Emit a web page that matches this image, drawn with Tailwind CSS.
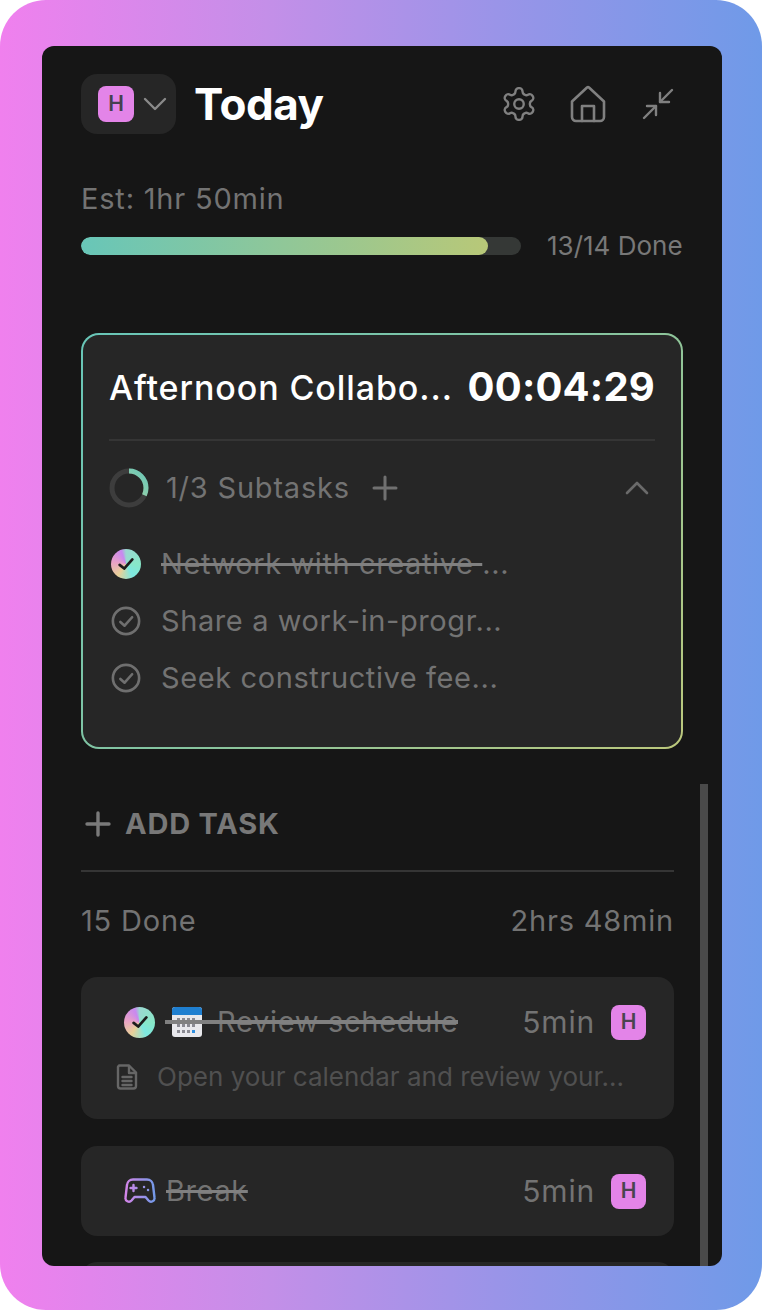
<!DOCTYPE html>
<html lang="en">
<head>
    <meta charset="UTF-8">
    <meta name="viewport" content="width=device-width, initial-scale=1.0">
    <title>Today</title>
    <script src="https://cdn.jsdelivr.net/npm/@tailwindcss/browser@4"></script>
</head>
<body class="bg-white font-['Inter',sans-serif]">

    <div class="w-[762px] h-[1310px] rounded-[46px] pt-[46px] pl-[42px] bg-[linear-gradient(90deg,#f080ee_0%,#c48fe8_35%,#9a94e8_65%,#6f9ae8_100%)] overflow-hidden">
        <div class="relative w-[680px] h-[1220px] rounded-[12px] bg-[#161616] overflow-hidden pl-[39px] pt-[28px]">

            <!-- Header -->
            <div class="flex items-center h-[60px]">
                <div class="flex items-center w-[95px] h-[60px] rounded-[16px] bg-[#262626] pl-[17px]">
                    <div class="flex items-center justify-center w-[36px] h-[36px] rounded-[8px] bg-[#e384e8] text-[#45404e] text-[21px] font-semibold">H</div>
                    <svg class="ml-[9px]" width="24" height="14" viewBox="0 0 24 14" fill="none" stroke="#8a8a8a" stroke-width="2.4" stroke-linecap="round" stroke-linejoin="round"><path d="M2 2l10 10 10-10"/></svg>
                </div>
                <h1 class="ml-[18px] text-[44px] leading-[60px] font-bold tracking-[-0.5px] text-white">Today</h1>
                <div class="ml-auto flex items-center mr-[48px]">
                    <svg width="38" height="38" viewBox="0 0 24 24" fill="none" stroke="#808080" stroke-width="1.5" stroke-linecap="round" stroke-linejoin="round"><path d="M12.22 2h-.44a2 2 0 0 0-2 2v.18a2 2 0 0 1-1 1.73l-.43.25a2 2 0 0 1-2 0l-.15-.08a2 2 0 0 0-2.73.73l-.22.38a2 2 0 0 0 .73 2.73l.15.1a2 2 0 0 1 1 1.72v.51a2 2 0 0 1-1 1.74l-.15.09a2 2 0 0 0-.73 2.73l.22.38a2 2 0 0 0 2.73.73l.15-.08a2 2 0 0 1 2 0l.43.25a2 2 0 0 1 1 1.73V20a2 2 0 0 0 2 2h.44a2 2 0 0 0 2-2v-.18a2 2 0 0 1 1-1.73l.43-.25a2 2 0 0 1 2 0l.15.08a2 2 0 0 0 2.73-.73l.22-.39a2 2 0 0 0-.73-2.73l-.15-.08a2 2 0 0 1-1-1.74v-.5a2 2 0 0 1 1-1.74l.15-.09a2 2 0 0 0 .73-2.73l-.22-.38a2 2 0 0 0-2.73-.73l-.15.08a2 2 0 0 1-2 0l-.43-.25a2 2 0 0 1-1-1.73V4a2 2 0 0 0-2-2z"/><circle cx="12" cy="12" r="3"/></svg>
                    <svg class="ml-[32px]" width="36" height="38" viewBox="0 0 36 38" fill="none" stroke="#808080" stroke-width="2.6" stroke-linecap="round" stroke-linejoin="round"><path d="M2 16.5 17 2.5a1.5 1.5 0 0 1 2 0l15 14V32a4 4 0 0 1-4 4H6a4 4 0 0 1-4-4z"/><path d="M12 36V21h12v15"/></svg>
                    <svg class="ml-[36px]" width="32" height="32" viewBox="0 0 32 32" fill="none" stroke="#808080" stroke-width="2.4" stroke-linecap="round" stroke-linejoin="round"><path d="M30 2 18 14"/><path d="M18 5v9h9"/><path d="M2 30 14 18"/><path d="M5 18h9v9"/></svg>
                </div>
            </div>

            <!-- Estimate and progress -->
            <div>
                <p class="mt-[48px] text-[29px] leading-[34px] tracking-[0.8px] text-[#737373]">Est: 1hr 50min</p>
                <div class="flex items-center mt-[21px] h-[18px]">
                    <div class="w-[440px] h-[18px] rounded-full bg-[#353836] overflow-hidden">
                        <div class="w-[407px] h-full rounded-full bg-[linear-gradient(90deg,#68c6b8,#b8c878)]"></div>
                    </div>
                    <span class="ml-[26px] text-[26px] leading-[18px] text-[#787878] whitespace-nowrap">13/14 Done</span>
                </div>

                <!-- Active task -->
                <div class="mt-[78px] w-[602px] h-[416px] rounded-[18px] p-[2px] bg-[linear-gradient(135deg,#68c6b8,#85c4a0_50%,#bcc87c)]">
                    <div class="w-full h-full rounded-[16px] bg-[#262626] px-[26px]">
                        <div class="flex items-center justify-between h-[106px] border-b-2 border-[#353535]">
                            <span class="text-[34px] font-medium tracking-[0.9px] text-white whitespace-nowrap">Afternoon Collabo...</span>
                            <span class="text-[40px] font-bold tracking-[0.2px] text-white">00:04:29</span>
                        </div>
                        <div class="flex items-center h-[94px]">
                            <svg width="40" height="40" viewBox="0 0 40 40" fill="none" class="-rotate-90">
                                <defs><linearGradient id="arc" x1="0" y1="0" x2="1" y2="1"><stop offset="0" stop-color="#c8dc98"/><stop offset="1" stop-color="#68c6b8"/></linearGradient></defs>
                                <circle cx="20" cy="20" r="17" stroke="#3d3d3d" stroke-width="5"/>
                                <circle cx="20" cy="20" r="17" stroke="url(#arc)" stroke-width="5" stroke-dasharray="34 107"/>
                            </svg>
                            <span class="ml-[17px] text-[29px] tracking-[0.8px] text-[#737373]">1/3 Subtasks</span>
                            <svg class="ml-[22px]" width="26" height="26" viewBox="0 0 26 26" stroke="#707070" stroke-width="3" stroke-linecap="round"><path d="M13 2v22M2 13h22"/></svg>
                            <svg class="ml-auto mr-[6px]" width="24" height="14" viewBox="0 0 24 14" fill="none" stroke="#6a6a6a" stroke-width="2.6" stroke-linecap="round" stroke-linejoin="round"><path d="M2 12 12 2l10 10"/></svg>
                        </div>
                        <ul class="flex flex-col text-[29px] tracking-[0.6px] text-[#737373]">
                            <li class="flex items-center h-[57px]">
                                <div class="flex items-center justify-center w-[30px] h-[30px] ml-[2px] rounded-full bg-[conic-gradient(#9ad8d0_0deg,#88e8c8_90deg,#7ce8e0_150deg,#e8d098_215deg,#e8a0c8_280deg,#c888f0_340deg,#9ad8d0_360deg)]">
                                    <svg width="20" height="20" viewBox="0 0 22 22" fill="none" stroke="#1c1c1c" stroke-width="3" stroke-linecap="round" stroke-linejoin="round"><path d="M4 12l5 4 9-10"/></svg>
                                </div>
                                <span class="ml-[20px] whitespace-nowrap"><span class="line-through decoration-[3px] decoration-[#808080]">Network with creative&nbsp;</span><span>...</span></span>
                            </li>
                            <li class="flex items-center h-[57px]">
                                <svg class="ml-[2px]" width="30" height="30" viewBox="0 0 32 32" fill="none" stroke="#6f6f6f" stroke-width="2.8" stroke-linecap="round" stroke-linejoin="round"><circle cx="16" cy="16" r="14"/><path d="M10 17l4.500 4 8-9"/></svg>
                                <span class="ml-[20px] whitespace-nowrap">Share a work-in-progr...</span>
                            </li>
                            <li class="flex items-center h-[57px]">
                                <svg class="ml-[2px]" width="30" height="30" viewBox="0 0 32 32" fill="none" stroke="#6f6f6f" stroke-width="2.8" stroke-linecap="round" stroke-linejoin="round"><circle cx="16" cy="16" r="14"/><path d="M10 17l4.500 4 8-9"/></svg>
                                <span class="ml-[20px] whitespace-nowrap">Seek constructive fee...</span>
                            </li>
                        </ul>
                    </div>
                </div>

                <!-- Add task -->
                <div class="flex items-center w-[593px] h-[123px] border-b-2 border-[#353535] pt-[28px]">
                    <svg class="ml-[4px]" width="26" height="26" viewBox="0 0 26 26" stroke="#7a7a7a" stroke-width="3.400" stroke-linecap="round"><path d="M13 2v22M2 13h22"/></svg>
                    <span class="ml-[14px] text-[29px] font-bold tracking-[0.8px] text-[#787878]">ADD TASK</span>
                </div>

                <div class="flex items-center justify-between w-[593px] h-[34px] mt-[32px] text-[29px] tracking-[0.8px] text-[#737373]">
                    <span>15 Done</span>
                    <span>2hrs 48min</span>
                </div>

                <!-- Done tasks -->
                <div class="w-[593px] h-[142px] mt-[39px] rounded-[16px] bg-[#262626] pl-[43px] pr-[28px] pt-[27px]">
                    <div class="flex items-center h-[36px]">
                        <div class="flex items-center justify-center w-[31px] h-[31px] rounded-full bg-[conic-gradient(#9ad8d0_0deg,#88e8c8_90deg,#7ce8e0_150deg,#e8d098_215deg,#e8a0c8_280deg,#c888f0_340deg,#9ad8d0_360deg)]">
                            <svg width="20" height="20" viewBox="0 0 22 22" fill="none" stroke="#1c1c1c" stroke-width="3" stroke-linecap="round" stroke-linejoin="round"><path d="M4 12l5 4 9-10"/></svg>
                        </div>
                        <div class="relative flex items-center ml-[10px] pl-[7px]">
                            <svg width="30" height="30" viewBox="0 0 30 30">
                                <rect x="0" y="0" width="30" height="30" rx="3" fill="#e8e8ec"/>
                                <path d="M0 3a3 3 0 0 1 3-3h24a3 3 0 0 1 3 3v5H0z" fill="#1f7fd0"/>
                                <path d="M5 11h3v3H5zM10 11h3v3h-3zM15 11h3v3h-3zM20 11h3v3h-3zM5 17h3v3H5zM10 17h3v3h-3zM15 17h3v3h-3zM20 17h3v3h-3zM5 23h3v3H5zM10 23h3v3h-3zM15 23h3v3h-3z" fill="#8a8a92"/>
                                <path d="M20 23h3v3h-3z" fill="#2f8fe0"/>
                            </svg>
                            <span class="ml-[15px] text-[29px] tracking-[0.7px] text-[#737373] whitespace-nowrap">Review schedule</span>
                            <div class="absolute left-0 right-0 top-1/2 h-[4px] -translate-y-1/2 bg-[#808080]"></div>
                        </div>
                        <span class="ml-auto text-[30px] tracking-[0.8px] text-[#737373]">5min</span>
                        <div class="flex items-center justify-center ml-[16px] w-[35px] h-[35px] rounded-[8px] bg-[#e384e8] text-[#4a4450] text-[21px] font-semibold">H</div>
                    </div>
                    <div class="flex items-center mt-[17px] -ml-[8px]">
                        <svg width="22" height="26" viewBox="0 0 22 26" fill="none" stroke="#666666" stroke-width="2.4" stroke-linecap="round" stroke-linejoin="round"><path d="M3 1.500h10l7 7V22a2.500 2.500 0 0 1-2.500 2.500h-13A2.500 2.500 0 0 1 2 22V3z"/><path d="M13 2v7h7M6.500 13h9M6.500 17h9M6.500 21h9"/></svg>
                        <span class="ml-[19px] text-[26px] text-[#505050] whitespace-nowrap">Open your calendar and review your...</span>
                    </div>
                </div>

                <div class="flex items-center w-[593px] h-[90px] mt-[27px] rounded-[16px] bg-[#262626] pl-[43px] pr-[28px]">
                    <svg width="32" height="26" viewBox="0 0 32 26" fill="none" stroke="url(#pad)" stroke-width="2.400" stroke-linecap="round" stroke-linejoin="round">
                        <defs><linearGradient id="pad" x1="0" y1="0" x2="32" y2="0" gradientUnits="userSpaceOnUse"><stop offset="0" stop-color="#d884e8"/><stop offset="1" stop-color="#6f9ae8"/></linearGradient></defs>
                        <path d="M9 1.500h14a6 6 0 0 1 6 5.500l1.500 12.500a3.500 3.500 0 0 1-6 3L21.500 19h-11l-3 3.500a3.500 3.500 0 0 1-6-3L3 7a6 6 0 0 1 6-5.500z"/>
                        <path d="M9.500 7v6M6.500 10h6M20 9h.1M24 12h.1"/>
                    </svg>
                    <span class="ml-[10px] text-[29px] tracking-[0.6px] text-[#737373] line-through decoration-[3px] decoration-[#808080]">Break</span>
                    <span class="ml-auto text-[30px] tracking-[0.8px] text-[#737373]">5min</span>
                    <div class="flex items-center justify-center ml-[16px] w-[35px] h-[35px] rounded-[8px] bg-[#e384e8] text-[#4a4450] text-[21px] font-semibold">H</div>
                </div>

                <div class="w-[593px] h-[90px] mt-[26px] rounded-[16px] bg-[#262626]"></div>
            </div>

            <!-- Scrollbar -->
            <div class="absolute left-[658px] top-[738px] bottom-0 w-[8px] bg-[#4a4a4a]"></div>
        </div>
    </div>
</body>
</html>
